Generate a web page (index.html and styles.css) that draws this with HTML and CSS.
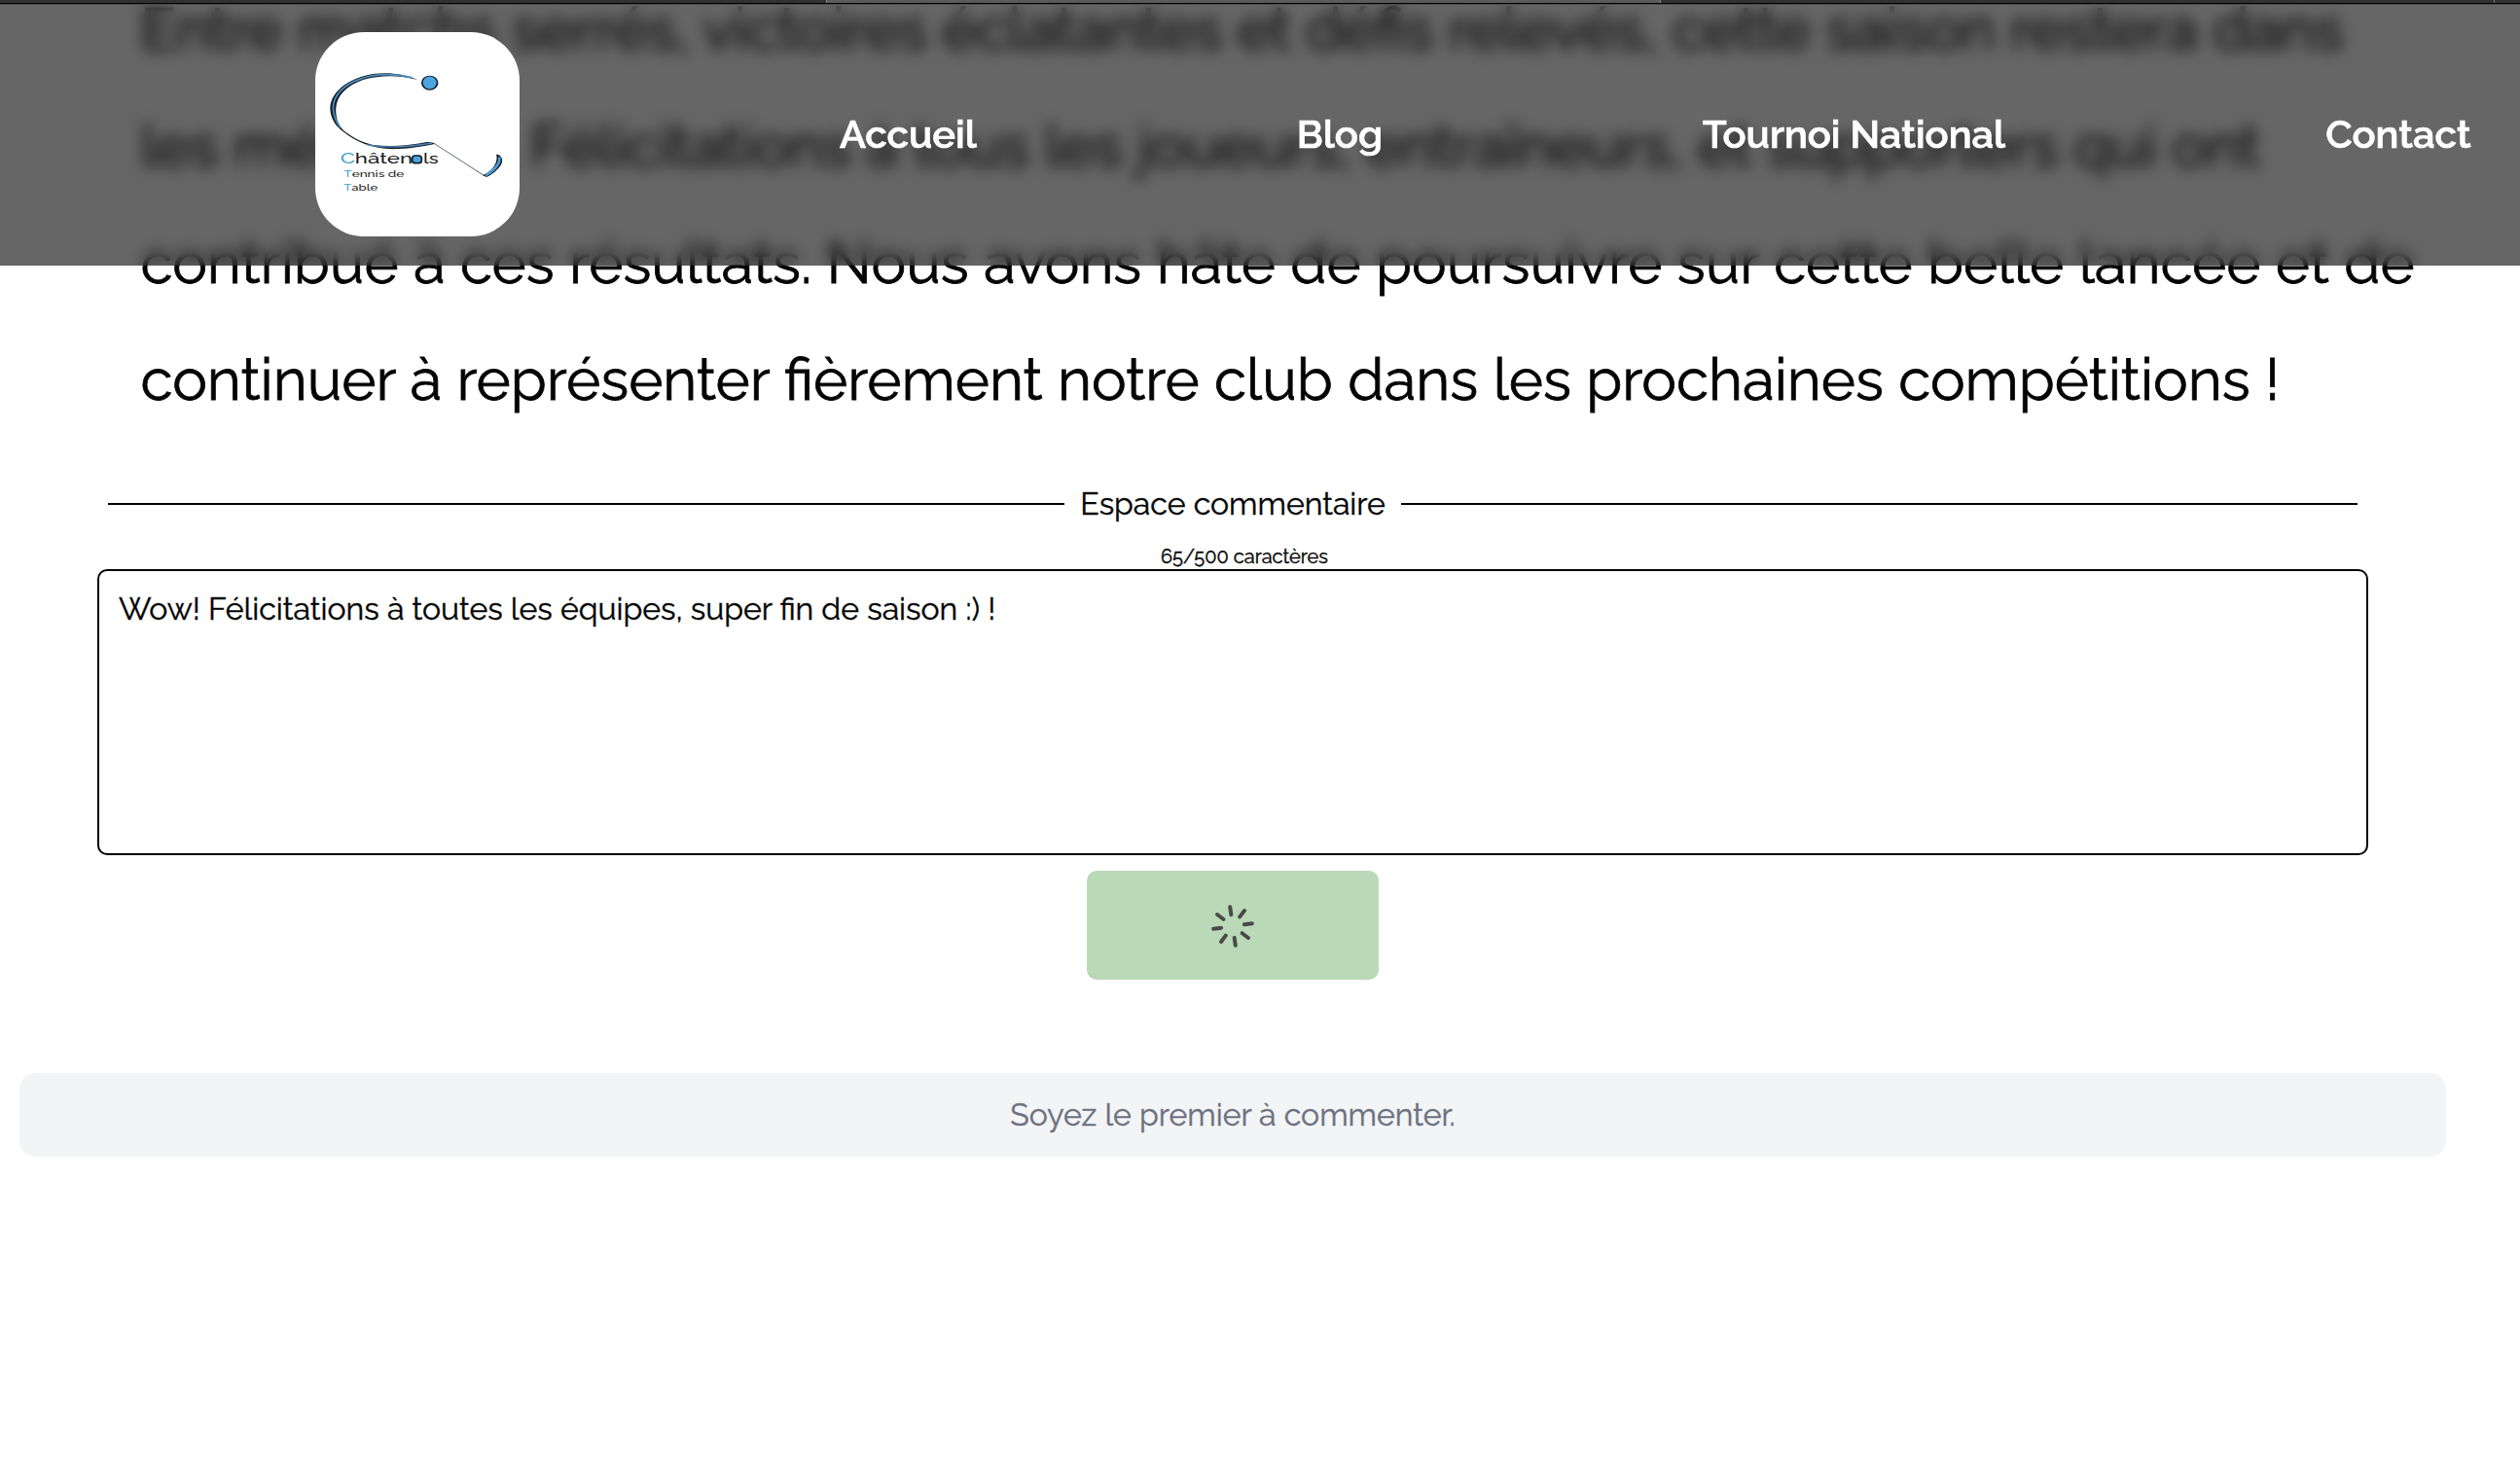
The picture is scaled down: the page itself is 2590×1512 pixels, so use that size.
FILE: index.html
```html
<!DOCTYPE html>
<html lang="fr">
<head>
<meta charset="utf-8">
<title>Châtenois Tennis de Table</title>
<link rel="stylesheet" href="styles.css">
</head>
<body>
<header class="topbar">
  <div class="tabstrip"><span class="tab"></span><span class="tab tab-active"></span><span class="tab"></span><span class="tab-end"></span></div>
  <div class="navbar">
    <a class="logo">
      <svg viewBox="72 99 630 630" aria-label="Châtenois Tennis de Table">
        <path fill="#16212c" d="M388 246C340 224 270 218 215 236C160 254 118 290 118 335C119 365 134 388 158 406C196 438 250 459 310 460C360 459 400 452 440 444L588 541L600 546C628 532 652 510 648 490C645 480 638 476 630 476C638 502 615 530 590 539L436 440C420 436 410 438 396 442C350 450 300 452 250 447C215 439 186 424 160 403C142 385 134 360 136 332C139 295 168 264 220 246C275 230 335 232 388 246Z"/>
        <path fill="none" stroke="#4c8fc4" stroke-width="5" d="M370 239C320 227 260 226 218 241C165 257 128 290 127 333C128 356 137 377 150 394"/>
        <path fill="none" stroke="#4f86b8" stroke-width="4" d="M230 446C290 458 350 455 432 441"/>
        <path fill="none" stroke="#4c9ed9" stroke-width="8" d="M639 484C645 504 620 530 597 541"/>
        <path fill="#fff" d="M444 452L584 545L590 539L440 441Z"/>
        <path fill="none" stroke="#4b5558" stroke-width="2.500" d="M438 442L590 540"/>
        <ellipse cx="425" cy="255.500" rx="26" ry="22.500" fill="#101c28"/>
        <ellipse cx="425" cy="255" rx="21" ry="19.500" fill="#4ea5de"/>
        <g class="logo-text">
          <text transform="translate(149 504) scale(1.55 1)" font-size="43"><tspan class="initial">C</tspan>hâten</text>
          <rect x="371" y="480" width="29" height="23" rx="9" fill="#4ea5de" stroke="#101c28" stroke-width="5"/>
          <text transform="translate(405 504) scale(1.4 1)" font-size="43">ls</text>
          <text transform="translate(160 545) scale(1.45 1)" font-size="28"><tspan class="initial">T</tspan>ennis de</text>
          <text transform="translate(160 589) scale(1.4 1)" font-size="28"><tspan class="initial">T</tspan>able</text>
        </g>
      </svg>
    </a>
    <nav class="links">
      <a>Accueil</a>
      <a>Blog</a>
      <a>Tournoi National</a>
      <a>Contact</a>
    </nav>
  </div>
</header>
<main class="page">
  <article class="story">
    Entre matchs serrés, victoires éclatantes et défis relevés, cette saison restera dans<br>
    les mémoires. Félicitations à tous les joueurs, entraîneurs, et supporters qui ont<br>
    contribué à ces résultats. Nous avons hâte de poursuivre sur cette belle lancée et de<br>
    continuer à représenter fièrement notre club dans les prochaines compétitions !
  </article>
  <section class="comments">
    <h2 class="divider">Espace commentaire</h2>
    <div class="counter">65/500 caractères</div>
    <div class="field">Wow! Félicitations à toutes les équipes, super fin de saison :) !</div>
    <button class="submit" aria-label="Envoi en cours">
      <svg class="spinner" viewBox="-24 -25 48 48">
        <g transform="rotate(-8)" stroke="#4a4a4a" stroke-width="4" stroke-linecap="round">
          <path d="M0-12V-20M0 12V20M12 0H20M-12 0H-20M8.500-8.500L14.100-14.100M-8.500 8.500L-14.100 14.100M8.500 8.500L14.100 14.100M-8.500-8.500L-14.100-14.100"/>
        </g>
      </svg>
    </button>
  </section>
  <p class="empty">Soyez le premier à commenter.</p>
</main>
</body>
</html>
```
FILE: styles.css
```css
* { box-sizing: border-box; }

body {
  margin: 0;
  height: 1512px;
  overflow: hidden;
  background: #fff;
  color: #050505;
  font-family: Raleway, Lato, sans-serif;
  font-size: 32px;
  -webkit-text-stroke: 0.4px currentColor;
}

/* fixed header over the scrolled article */
.topbar {
  position: fixed;
  top: 0;
  left: 0;
  width: 100%;
  height: 273px;
  z-index: 2;
  background: rgba(0, 0, 0, 0.6);
  backdrop-filter: blur(8px);
}

.tabstrip {
  display: flex;
  height: 5px;
  background: #323232;
  border-bottom: 1px solid #4a4a4a;
  box-shadow: inset 0 -1px #000;
}

.tab { width: 849px; height: 3px; }
.tab-active {
  width: 858px;
  background: #5b5b5b;
  border: solid #858585;
  border-width: 0 1px;
}
.tab-end { width: 1px; height: 3px; background: #777; margin-left: 7px; }

.navbar {
  display: flex;
  align-items: center;
  height: 266px;
  padding-left: 324px;
}

.logo {
  width: 210px;
  height: 210px;
  flex: none;
  border-radius: 50px;
  overflow: hidden;
  background: #fff;
}
.logo svg { display: block; width: 100%; height: 100%; }
.logo-text { font-family: Raleway, Lato, sans-serif; font-weight: 500; fill: #1c1c1c; -webkit-text-stroke: 0; }
.logo-text .initial { fill: #3fa3cf; }

.links {
  display: flex;
  gap: 329px;
  margin-left: 329px;
  color: #fff;
  font-size: 40px;
  font-weight: 600;
  line-height: 60px;
  white-space: nowrap;
  -webkit-text-stroke-width: 0.7px;
}

.page { width: 2534px; }

.story {
  margin-top: -30px;
  padding-left: 144.5px;
  font-size: 60px;
  line-height: 120px;
  white-space: nowrap;
  -webkit-text-stroke-width: 0.8px;
}

.comments {
  display: flex;
  flex-direction: column;
  align-items: center;
  padding: 43px 100px 0;
}

.divider {
  display: flex;
  align-items: center;
  gap: 16px;
  width: 2312px;
  margin: 0;
  padding-top: 1px;
  font-size: 32px;
  font-weight: 400;
  line-height: 48px;
}
.divider::before,
.divider::after {
  content: "";
  flex: 1;
  height: 2px;
  background: #000;
}

.counter {
  margin-top: 17px;
  padding-left: 24px;
  font-size: 20px;
  line-height: 26px;
}

.field {
  width: 2334px;
  height: 294px;
  padding: 15px 20px;
  border: 2px solid #000;
  border-radius: 10px;
  line-height: 48px;
}

.submit {
  display: flex;
  align-items: center;
  justify-content: center;
  width: 300px;
  height: 112px;
  margin-top: 16px;
  border: 0;
  border-radius: 10px;
  background: #bad9b7;
}
.spinner { width: 48px; height: 48px; }

.empty {
  margin: 96px 20px 0;
  padding: 20px;
  border-radius: 16px;
  background: #f3f4f6;
  color: #6b7280;
  line-height: 46px;
  text-align: center;
}
```
